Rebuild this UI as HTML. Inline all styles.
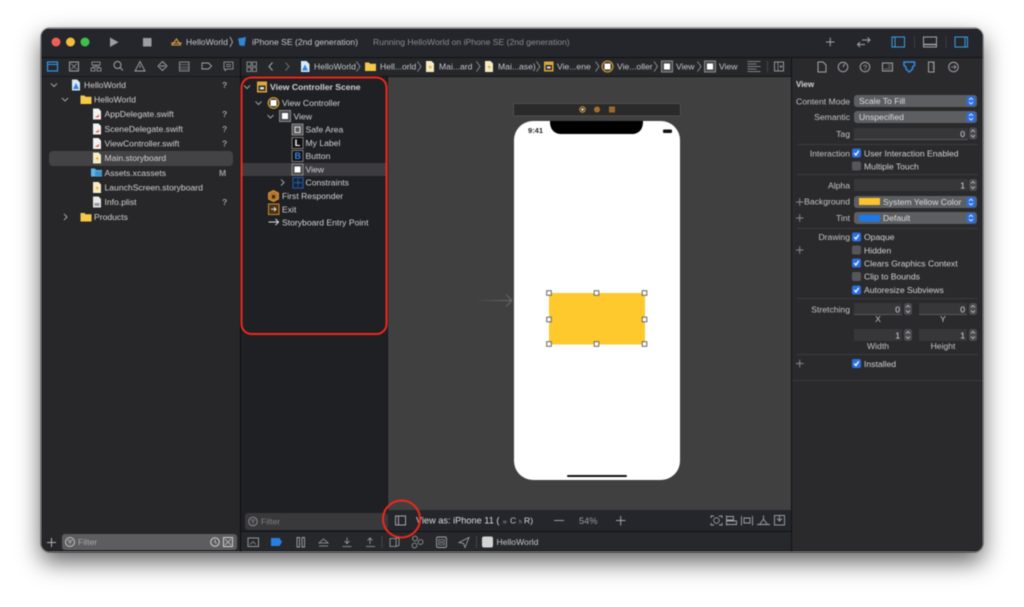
<!DOCTYPE html>
<html><head><meta charset="utf-8"><title>Xcode</title>
<style>
html,body{margin:0;padding:0;background:#fff;width:1024px;height:607px;overflow:hidden}
svg{display:block;position:absolute;left:0;top:0;filter:blur(.4px)}
text{font-family:"Liberation Sans",sans-serif;font-size:8.6px;fill:#d2d2d3}
.w{position:absolute;left:41px;top:28px;width:942px;height:524px;border-radius:9px;box-shadow:0 0 2px rgba(0,0,0,.5),0 10px 24px rgba(0,0,0,.62)}
.r{text-anchor:end;fill:#c4c4c5}
.m{text-anchor:middle;fill:#c4c4c5}
.g{fill:#9a9a9d}
.ic{fill:none;stroke:#a2a4a8}
</style></head><body>
<div class="w"></div>
<svg width="1024" height="607" viewBox="0 0 1024 607">
<defs>
<clipPath id="win"><rect x="41" y="28" width="942" height="524" rx="9"/></clipPath>
<g id="doc"><path d="M-4-5.500h5.500l2.500 2.500v8.500h-8z" fill="#f2f2f2"/></g>
<g id="swift"><use href="#doc"/><path d="M-2 3.500l3.500-.3 1-2.700-2.500 1.500z" fill="#e8502f"/></g>
<g id="sb"><path d="M-4-5.500h5.500l2.500 2.500v8.500h-8z" fill="#f6edc6"/><path d="M.5-2l-2 3h2l-1 2.500 2.500-3.500h-2z" fill="#e0a020"/></g>
<g id="folder"><path d="M-5.500-4h4l1 1.300h6v7.200h-11z" fill="#f5c94a"/></g>
<g id="sq"><rect x="-5.500" y="-5.500" width="11" height="11" fill="#4a4a4d" stroke="#8a8a8d"/><rect x="-3" y="-3" width="6" height="6" fill="#fff"/></g>
<g id="chk"><rect x="-4.500" y="-4.500" width="9" height="9" rx="2" fill="#2a6fdc"/><path d="M-2.200 0l1.600 2 2.800-4.200" fill="none" stroke="#fff" stroke-width="1.300"/></g>
<g id="unchk"><rect x="-4.500" y="-4.500" width="9" height="9" rx="2" fill="#56575a"/></g>
<g id="pop"><rect x="-4.500" y="-5" width="9" height="10" rx="2.500" fill="#2a6fdc"/><path d="M-2-1l2-2 2 2M-2 1l2 2 2-2" fill="none" stroke="#fff" stroke-width=".8"/></g>
<g id="step"><rect x="-4" y="-6" width="8" height="12" rx="2.500" fill="#4b4c4f"/><path d="M-2-1.500l2-2 2 2M-2 1.500l2 2 2-2" fill="none" stroke="#c8c8c8" stroke-width=".8"/></g>
<path id="dn" d="M-3-1.500l3 3 3-3" fill="none" stroke="#9c9c9f" stroke-width="1.100"/>
<path id="rt" d="M-1.500-3l3 3-3 3" fill="none" stroke="#9c9c9f" stroke-width="1.100"/>
<path id="crumb" d="M-1.500-5l3.500 5-3.500 5" fill="none" stroke="#8f9094" stroke-width=".9"/>
<g id="hd"><rect x="-2.300" y="-2.300" width="4.600" height="4.600" fill="#fff" stroke="#666" stroke-width="1"/></g>
<linearGradient id="ar"><stop offset="0" stop-color="#404040"/><stop offset="1" stop-color="#6e6e6e"/></linearGradient>
</defs>
<g clip-path="url(#win)">
<rect x="41" y="28" width="942" height="524" fill="#252628"/>
<!-- toolbar -->
<rect x="41" y="28" width="942" height="29" fill="#24262b"/>
<rect x="41" y="28" width="942" height="1" fill="#5a5a5d"/>
<rect x="41" y="57" width="942" height="1" fill="#111214"/>
<!-- second row -->
<rect x="41" y="58" width="942" height="18" fill="#25272b"/>
<rect x="241" y="76" width="551" height="1" fill="#131416"/>
<rect x="41" y="76" width="200" height="1" fill="#17181a"/>
<rect x="792" y="76" width="191" height="1" fill="#17181a"/>
<!-- navigator -->
<rect x="41" y="77" width="199" height="475" fill="#272729"/>
<rect x="240" y="58" width="1" height="494" fill="#0e0e10"/>
<rect x="49" y="151" width="184" height="15" rx="4" fill="#434346"/>
<!-- outline -->
<rect x="241" y="77" width="146" height="433" fill="#1f2023"/>
<rect x="241" y="163" width="146" height="13" fill="#3c3c3f"/>
<rect x="241" y="510" width="147" height="21" fill="#1f2023"/>
<!-- canvas -->
<rect x="388" y="77" width="404" height="433" fill="#404040"/>
<rect x="387" y="77" width="1" height="433" fill="#161618"/>
<rect x="388" y="510" width="404" height="21" fill="#24262b"/>
<rect x="241" y="531" width="551" height="1" fill="#111214"/>
<rect x="241" y="532" width="551" height="20" fill="#26282c"/>
<!-- inspector -->
<rect x="792" y="58" width="191" height="494" fill="#2a2a2c"/>
<rect x="791" y="58" width="1" height="494" fill="#111214"/>
<rect x="792" y="380" width="191" height="1" fill="#3a3a3c"/>

<!-- traffic lights -->
<circle cx="56" cy="42" r="4.500" fill="#ee5f58"/>
<circle cx="70.500" cy="42" r="4.500" fill="#f6bd3c"/>
<circle cx="85" cy="42" r="4.500" fill="#3fc14a"/>
<path d="M110 37.500v9.500l8.500-4.750z" fill="#9c9ea2"/>
<rect x="143" y="38" width="8.500" height="8.500" fill="#9c9ea2"/>
<path d="M172 45l4.500-6 4 6zM171 43h11" fill="none" stroke="#d8a040" stroke-width="1.100"/>
<text x="186" y="45.200" style="fill:#c6c7ca">HelloWorld</text>
<path d="M230 37l2.500 5-2.500 5" fill="none" stroke="#a0a0a4"/>
<path d="M238 38.500l8-1.500-1.500 9-5-.5z" fill="#2f86d8"/>
<text x="252" y="45.200" style="fill:#c6c7ca">iPhone SE (2nd generation)</text>
<text x="373" y="45.200" style="fill:#8b8c90">Running HelloWorld on iPhone SE (2nd generation)</text>
<path d="M826 42h8.500M830.200 37.800v8.500" class="ic"/>
<path d="M858 44.500h7m-5-2.500l-2.500 2.500 2.500 2.500M862 40h8m-2.500-2.500l2.500 2.500-2.500 2.500" class="ic"/>
<rect x="892" y="37" width="12.500" height="10" fill="none" stroke="#3b9fe0"/><path d="M895 37v10" stroke="#3b9fe0"/>
<path d="M914.500 36v12" stroke="#3a3c40"/>
<rect x="923.500" y="37" width="13" height="10" class="ic"/><path d="M923.500 44.500h13" stroke="#a2a4a8" stroke-width="1.500"/>
<path d="M946 36v12" stroke="#3a3c40"/>
<rect x="955" y="37" width="12.500" height="10" fill="none" stroke="#3b9fe0"/><path d="M965 37v10" stroke="#3b9fe0"/>

<!-- navigator tabs -->
<rect x="47.500" y="62" width="10" height="9" fill="none" stroke="#3a93e6" stroke-width="1.200"/><path d="M47.500 64.500h10" stroke="#3a93e6"/>
<rect x="69.500" y="62" width="9" height="9" class="ic"/><path d="M71 63.500l6 6m0-6l-6 6" class="ic" stroke-width=".7"/>
<path d="M92 62h8v3h-8zM91 68h4v3h-4zM97 68h4v3h-4zM96 65v1.500h-3v1.500m3-1.500h3v1.500" class="ic" stroke-width=".8"/>
<circle cx="117.500" cy="65" r="3.500" class="ic"/><path d="M120 67.500l3 3" class="ic"/>
<path d="M140 61.500l5 9.500h-10zM140 65v3" class="ic" stroke-width=".9"/>
<path d="M162.500 61.500l4.500 4.500-4.500 4.500-4.500-4.500zM160 66h5" class="ic" stroke-width=".9"/>
<rect x="179.500" y="62" width="9.500" height="9" class="ic" stroke-width=".8"/><path d="M179.500 64.500h9.500M179.500 67h9.500M179.500 69h9.500" class="ic" stroke-width=".6"/>
<path d="M202 63h6.500l3 3-3 3h-6.500z" class="ic" stroke-width=".9"/>
<path d="M224 62h9v7h-6l-2 1.500v-1.500h-1zM226 64.500h5M226 66.500h5" class="ic" stroke-width=".8"/>

<!-- navigator tree -->
<use href="#dn" x="54" y="85"/>
<path d="M72 79.500h5l3 3v8h-8z" fill="#d8e8f8"/><path d="M73 89l3-6 3 6z" fill="#2f86d8"/>
<text x="84" y="88.200">HelloWorld</text><text x="222" y="88.200" class="g" style="font-weight:bold">?</text>
<use href="#dn" x="65" y="99.500"/><use href="#folder" x="86" y="99.500"/><text x="94" y="102.700">HelloWorld</text>
<use href="#swift" x="97" y="114"/><text x="104.500" y="117.200">AppDelegate.swift</text><text x="222" y="117.200" class="g" style="font-weight:bold">?</text>
<use href="#swift" x="97" y="129"/><text x="104.500" y="132.200">SceneDelegate.swift</text><text x="222" y="132.200" class="g" style="font-weight:bold">?</text>
<use href="#swift" x="97" y="143.500"/><text x="104.500" y="146.700">ViewController.swift</text><text x="222" y="146.700" class="g" style="font-weight:bold">?</text>
<use href="#sb" x="97" y="158"/><text x="104.500" y="161.200">Main.storyboard</text>
<path d="M91 168.500h4l1 1.500h6v6.500h-11z" fill="#5cb8ea"/><rect x="95" y="171" width="7" height="5" fill="#3d94cc"/>
<text x="104.500" y="176.200">Assets.xcassets</text><text x="219" y="176.200" class="g" style="font-weight:bold">M</text>
<use href="#sb" x="97" y="187.500"/><text x="104.500" y="190.700">LaunchScreen.storyboard</text>
<path d="M93 196.500h5.500l2.500 2.500v8.500h-8z" fill="#e8e8e8"/><rect x="94.500" y="203" width="5" height="3" fill="#999"/>
<text x="104.500" y="205.200">Info.plist</text><text x="222" y="205.200" class="g" style="font-weight:bold">?</text>
<use href="#rt" x="65.500" y="217"/><use href="#folder" x="86" y="217"/><text x="94" y="220.200">Products</text>

<!-- nav filter -->
<path d="M47 542.500h9M51.500 538v9" stroke="#b0b0b3"/>
<rect x="62" y="534" width="175" height="16" rx="3" fill="#5d5d5f"/>
<circle cx="70" cy="542" r="4.500" fill="none" stroke="#c6c6c6"/><path d="M67.500 540.500h5M68.500 542.300h3M69.500 544h1" stroke="#c6c6c6" stroke-width=".8"/>
<text x="78" y="545.200" style="fill:#a9a9ab">Filter</text>
<circle cx="215" cy="542" r="4.300" fill="none" stroke="#d0d0d0"/><path d="M215 539.500v2.500l1.500 1.500" fill="none" stroke="#d0d0d0" stroke-width=".8"/>
<rect x="223.500" y="537.500" width="9" height="9" fill="none" stroke="#d0d0d0"/><path d="M225 539l6 6m0-6l-6 6" stroke="#d0d0d0" stroke-width=".7"/>

<!-- breadcrumb -->
<path d="M247 62h4v4h-4zM252.500 62h4v4h-4zM247 67.500h4v4h-4zM252.500 67.500h4v4h-4z" class="ic" stroke-width=".8"/>
<path d="M272.500 62.500l-3.500 4 3.500 4" class="ic" stroke-width="1.100"/>
<path d="M285.500 62.500l3.500 4-3.500 4" fill="none" stroke="#66686c" stroke-width="1.100"/>
<path d="M301 61h5.500l3 3v8h-8.500z" fill="#d8e8f8"/><path d="M302 70.500l3-6 3 6z" fill="#2f86d8"/>
<text x="314" y="69.700" style="fill:#c6c7ca">HelloWorld</text>
<use href="#crumb" x="358" y="66.500"/><use href="#folder" x="370.500" y="66.500"/>
<text x="380" y="69.700" style="fill:#c6c7ca">Hell...orld</text>
<use href="#crumb" x="419" y="66.500"/><use href="#sb" x="430" y="66.500"/>
<text x="439" y="69.700" style="fill:#c6c7ca">Mai...ard</text>
<use href="#crumb" x="478" y="66.500"/><use href="#sb" x="489" y="66.500"/>
<text x="498" y="69.700" style="fill:#c6c7ca">Mai...ase)</text>
<use href="#crumb" x="538" y="66.500"/>
<rect x="544" y="61.500" width="9.500" height="10" fill="#e0a838"/><rect x="545.500" y="65" width="6.500" height="5" fill="#2d2d2d"/><rect x="547" y="66.500" width="3.500" height="2" fill="#ddd"/>
<text x="557" y="69.700" style="fill:#c6c7ca">Vie...ene</text>
<use href="#crumb" x="597" y="66.500"/>
<circle cx="607.500" cy="66.500" r="5.500" fill="#3a3a3a" stroke="#dba22e" stroke-width="1.100"/><rect x="604.500" y="63.500" width="6" height="6" fill="#fff"/>
<text x="617" y="69.700" style="fill:#c6c7ca">Vie...oller</text>
<use href="#crumb" x="655.500" y="66.500"/><use href="#sq" x="667" y="66.500"/>
<text x="676" y="69.700" style="fill:#c6c7ca">View</text>
<use href="#crumb" x="699" y="66.500"/><use href="#sq" x="710" y="66.500"/>
<text x="719" y="69.700" style="fill:#c6c7ca">View</text>
<path d="M747.500 61.500h13M747.500 64h9M747.500 66.500h13M747.500 69h9M747.500 71.500h13" class="ic" stroke-width=".7"/>
<path d="M767.500 61v11" stroke="#44464a"/>
<rect x="774.500" y="62" width="9" height="9" class="ic" stroke-width=".9"/><path d="M778 62v9M779.500 66.500h3M781 65v3" class="ic" stroke-width=".7"/>

<!-- outline tree -->
<use href="#dn" x="247" y="87"/>
<rect x="257" y="81.500" width="10" height="11" fill="#e0a838"/><rect x="258.500" y="85.500" width="7" height="5.500" fill="#2d2d2d"/><rect x="260" y="87" width="4" height="2.500" fill="#ddd"/>
<text x="270" y="90" style="font-weight:bold">View Controller Scene</text>
<use href="#dn" x="258.500" y="103"/>
<circle cx="273.500" cy="103" r="5.300" fill="#3a3a3a" stroke="#dba22e" stroke-width="1.200"/><rect x="270.500" y="100" width="6" height="6" fill="#fff"/>
<text x="282" y="106.200">View Controller</text>
<use href="#dn" x="270.500" y="116.500"/><use href="#sq" x="285" y="116"/>
<text x="293.500" y="119.500">View</text>
<rect x="292" y="124" width="11" height="11" fill="#5a5a5d" stroke="#888"/><rect x="295" y="127" width="5" height="5.500" fill="none" stroke="#ddd"/>
<text x="305.500" y="132.700">Safe Area</text>
<rect x="292" y="137.500" width="11" height="11" fill="#111" stroke="#777"/><text x="294.800" y="146.200" style="fill:#fff;font-weight:bold;font-size:9px">L</text>
<text x="305.500" y="146">My Label</text>
<rect x="292" y="150.500" width="11" height="11" fill="#111" stroke="#777"/><text x="294.500" y="159.200" style="fill:#3b82e8;font-weight:bold;font-size:9px">B</text>
<text x="305.500" y="159.200">Button</text>
<use href="#sq" x="297.500" y="169.500"/>
<text x="305.500" y="172.500">View</text>
<use href="#rt" x="282.500" y="182.500"/>
<rect x="293" y="177.500" width="10" height="10.500" fill="#11243f" stroke="#2a5ca0"/><path d="M298 179v7.500M294.500 182.700h7" stroke="#4a9be8" stroke-width=".8" stroke-dasharray="1 1"/>
<text x="305.500" y="185.700">Constraints</text>
<path d="M273.500 190.500l5 2.500v6l-5 2.500-5-2.500v-6z" fill="#b8742a" stroke="#e0a040" stroke-width=".8"/><rect x="272" y="195" width="3" height="3.500" fill="#3a2a12"/>
<text x="282" y="199.200">First Responder</text>
<rect x="268.500" y="204" width="10.500" height="10.500" fill="#4a3214" stroke="#c98a30"/><path d="M271 209.200h5m-2-2l2 2-2 2" fill="none" stroke="#f0f0f0" stroke-width=".9"/>
<text x="282" y="212.500">Exit</text>
<path d="M268.500 222h10m-3-3l3 3-3 3" fill="none" stroke="#dcdcdc"/>
<text x="282" y="225.500">Storyboard Entry Point</text>
<rect x="241.500" y="77.500" width="145" height="256.500" rx="10" fill="none" stroke="#f0271d" stroke-width="2"/>

<!-- outline filter -->
<rect x="245" y="513" width="143" height="17" rx="3" fill="#39393b"/>
<circle cx="253" cy="521.500" r="4.300" fill="none" stroke="#8c8c8e"/><path d="M250.800 520h4.400M251.800 521.700h2.400M252.500 523.300h1" stroke="#8c8c8e" stroke-width=".8"/>
<text x="261" y="524.700" style="fill:#7f7f81">Filter</text>

<!-- canvas -->
<rect x="513.500" y="103.500" width="167" height="12.500" rx="1" fill="#2a2a2a" stroke="#4e4e4e"/>
<circle cx="582.500" cy="109.500" r="2.700" fill="#333" stroke="#d09a2c"/><rect x="581.500" y="108.500" width="2" height="2" fill="#fff"/>
<circle cx="597" cy="109.500" r="3" fill="#a86e28"/>
<rect x="609" y="106.500" width="6" height="6" fill="#9a6a2a"/>
<rect x="514" y="121" width="166" height="359" rx="19" fill="#fff"/>
<path d="M550 121h93v1c0 7-4 12-11 12h-71c-7 0-11-5-11-12z" fill="#000"/>
<text x="528" y="133" style="fill:#222;font-size:7.500px;font-weight:bold">9:41</text>
<rect x="663" y="129.500" width="9" height="3.500" rx="1" fill="#111"/>
<rect x="567" y="475" width="60" height="2" rx="1" fill="#111"/>
<rect x="549" y="293" width="96" height="51.500" fill="#fdc92c"/>
<use href="#hd" x="549" y="293"/><use href="#hd" x="596.500" y="293"/><use href="#hd" x="644.500" y="293"/>
<use href="#hd" x="549" y="319.500"/><use href="#hd" x="644.500" y="319.500"/>
<use href="#hd" x="549" y="344"/><use href="#hd" x="596.500" y="344"/><use href="#hd" x="644.500" y="344"/>
<rect x="474" y="300" width="38" height="1" fill="url(#ar)"/>
<path d="M506 294.500l6 6-6 6" fill="none" stroke="#666"/>

<!-- canvas bar -->
<rect x="395.500" y="516" width="10" height="9" fill="none" stroke="#a2a4a8"/><path d="M398.500 516v9" stroke="#a2a4a8"/>
<text x="416" y="523.500" style="font-size:9.200px;fill:#dcdcdd">View as: iPhone 11 (</text>
<text x="503" y="523.500" style="font-size:5px;fill:#9a9a9d">w</text><text x="510" y="523.500" style="font-size:8.600px;fill:#c6c7ca">C</text>
<text x="519" y="523.500" style="font-size:5px;fill:#9a9a9d">h</text><text x="524" y="523.500" style="font-size:8.600px;fill:#dcdcdd">R)</text>
<path d="M554 520.500h10" stroke="#9a9ca0"/>
<text x="579" y="524" style="font-size:9.200px;fill:#9a9ca0">54%</text>
<path d="M616 520.500h9.500M620.700 516v9.500" stroke="#a2a4a8"/>
<path d="M711 518v-2h3M719 516h3v2M722 523v2h-3M714 525h-3v-2" class="ic" stroke-width=".9"/><circle cx="716.500" cy="520.500" r="2.800" class="ic" stroke-width=".8"/>
<path d="M726.500 515.500v10M726.500 516.500h7v3.500h-7M726.500 521h10v3.500h-10" class="ic" stroke-width=".9"/>
<path d="M741.500 516v9.500M752.500 516v9.500M744 518h6v5h-6z" class="ic" stroke-width=".9"/>
<path d="M757 524.500h13M763.500 515.500v3M760 524l3.500-5 3.500 5" class="ic" stroke-width=".9"/>
<rect x="774.500" y="515.500" width="10" height="9.500" class="ic" stroke-width=".9"/><path d="M779.500 515v6m-2.500-2.500l2.500 2.500 2.500-2.500" class="ic" stroke-width=".9"/>

<!-- red circle -->
<circle cx="401.500" cy="519" r="18.500" fill="none" stroke="#f0271d" stroke-width="2"/>

<!-- bottom bar -->
<rect x="248" y="538" width="10.500" height="8.500" class="ic" stroke-width=".9"/><path d="M250 544.500l3-3 3 3" class="ic" stroke-width=".7"/>
<path d="M271 538h8.500l2.500 4-2.500 4h-8.500z" fill="#2a7de1"/>
<path d="M297 537.500h2.500v9.500h-2.500zM302 537.500h2.500v9.500H302z" class="ic" stroke-width=".9"/>
<path d="M319 543l4.500-4 4.500 4zM319 546h9" class="ic" stroke-width=".8"/>
<path d="M347 537.500v6m-2.500-2.500l2.500 2.500 2.500-2.500M342.500 546.500h9" class="ic" stroke-width=".8"/>
<path d="M370 544v-6m-2.500 2.500l2.500-2.500 2.500 2.500M366 546.500h9" class="ic" stroke-width=".8"/>
<path d="M382 536v12" stroke="#44464a"/>
<path d="M390 538.500h6v8h-6zM396 537.500l3 1v7l-3 1" class="ic" stroke-width=".8"/>
<circle cx="415" cy="538.500" r="2.400" class="ic" stroke-width=".8"/><circle cx="420.500" cy="542" r="2.400" class="ic" stroke-width=".8"/><circle cx="414.500" cy="545.500" r="2.400" class="ic" stroke-width=".8"/>
<rect x="436.500" y="537" width="10" height="10.500" rx="1.500" class="ic" stroke-width=".9"/><rect x="438.500" y="539.500" width="6" height="2" class="ic" stroke-width=".6"/><rect x="438.500" y="543" width="6" height="2" class="ic" stroke-width=".6"/>
<path d="M459 542.500l10-5-4 10-1.500-4z" class="ic" stroke-width=".8"/>
<path d="M476.500 536v12" stroke="#44464a"/>
<rect x="482" y="536.500" width="11" height="11" rx="2" fill="#d4d4d4"/>
<text x="496.500" y="545.200" style="fill:#c6c7ca">HelloWorld</text>

<!-- inspector tabs -->
<path d="M818 62h5l3 3v7h-8z" class="ic"/>
<circle cx="843" cy="67" r="4.800" class="ic"/><path d="M843 67l1.500-3" class="ic"/>
<circle cx="865" cy="67" r="4.800" class="ic"/><text x="863" y="70" style="font-size:7.500px;fill:#a2a4a8">?</text>
<rect x="882.500" y="63" width="10" height="8" class="ic"/><path d="M888 65h3M888 67h3M884 69h7" class="ic" stroke-width=".6"/>
<path d="M904 62h10.500v3.500l-2 1.500v2l-3.200 3-3.300-3v-2l-2-1.500z" fill="none" stroke="#2f8ce6" stroke-width="1.500"/>
<rect x="928.500" y="62" width="5.500" height="10" class="ic"/><path d="M932 63.500h2M932 66h2M932 68.500h2" class="ic" stroke-width=".6"/>
<circle cx="953.500" cy="67" r="4.800" class="ic"/><path d="M951 67h5m-2-2l2 2-2 2" class="ic" stroke-width=".8"/>

<!-- inspector -->
<text x="796" y="87" style="font-weight:bold;fill:#d6d6d7;font-size:8px">View</text>
<text x="850" y="104.300" class="r">Content Mode</text>
<rect x="854" y="95" width="123" height="12" rx="3" fill="#5d5e61"/><text x="859" y="104.200" style="fill:#dcdcdd">Scale To Fill</text><use href="#pop" x="971" y="101"/>
<text x="850" y="120" class="r">Semantic</text>
<rect x="854" y="111" width="123" height="12" rx="3" fill="#5d5e61"/><text x="859" y="120.200" style="fill:#dcdcdd">Unspecified</text><use href="#pop" x="971" y="117"/>
<text x="850" y="137" class="r">Tag</text>
<rect x="854" y="128" width="114" height="11.500" fill="#37373a"/><rect x="854" y="139" width="114" height="1" fill="#57575a"/><text x="965" y="137" class="r" style="fill:#dcdcdd">0</text><use href="#step" x="973" y="133.500"/>
<rect x="797" y="144" width="181" height="1" fill="#3c3c3f"/>
<text x="850" y="156.500" class="r">Interaction</text><use href="#chk" x="856.500" y="153"/><text x="864" y="156.500">User Interaction Enabled</text>
<use href="#unchk" x="856.500" y="166"/><text x="864" y="169.700">Multiple Touch</text>
<rect x="797" y="174" width="181" height="1" fill="#3c3c3f"/>
<text x="850" y="188.500" class="r">Alpha</text>
<rect x="854" y="179" width="114" height="12" fill="#37373a"/><text x="965" y="188.500" class="r" style="fill:#dcdcdd">1</text><use href="#step" x="973" y="185"/>
<path d="M796 202h7.500M799.700 198.200v7.500" stroke="#8a8a8d"/>
<text x="850" y="204.500" class="r">Background</text>
<rect x="854" y="196" width="123" height="12" rx="3" fill="#5d5e61"/><rect x="859" y="198" width="21" height="7" fill="#fdc22c"/><text x="883" y="205" style="fill:#dcdcdd">System Yellow Color</text><use href="#pop" x="971" y="202"/>
<path d="M796 218h7.500M799.700 214.200v7.500" stroke="#8a8a8d"/>
<text x="850" y="221" class="r">Tint</text>
<rect x="854" y="212" width="123" height="12" rx="3" fill="#5d5e61"/><rect x="859" y="215" width="21" height="6.500" fill="#1a78f0"/><text x="883" y="221" style="fill:#dcdcdd">Default</text><use href="#pop" x="971" y="218"/>
<rect x="797" y="228" width="181" height="1" fill="#3c3c3f"/>
<text x="850" y="240.200" class="r">Drawing</text><use href="#chk" x="856.500" y="237"/><text x="864" y="240.200">Opaque</text>
<path d="M796 250h7.500M799.700 246.200v7.500" stroke="#8a8a8d"/>
<use href="#unchk" x="856.500" y="250"/><text x="864" y="253.300">Hidden</text>
<use href="#chk" x="856.500" y="263"/><text x="864" y="266.500">Clears Graphics Context</text>
<use href="#unchk" x="856.500" y="276.500"/><text x="864" y="279.700">Clip to Bounds</text>
<use href="#chk" x="856.500" y="290"/><text x="864" y="293">Autoresize Subviews</text>
<rect x="797" y="298" width="181" height="1" fill="#3c3c3f"/>
<text x="850" y="312.300" class="r">Stretching</text>
<rect x="854" y="303" width="48" height="11.500" fill="#37373a"/><rect x="854" y="314" width="48" height="1" fill="#57575a"/><text x="900" y="312.300" class="r" style="fill:#dcdcdd">0</text><use href="#step" x="908" y="309"/>
<rect x="919" y="303" width="48" height="11.500" fill="#37373a"/><rect x="919" y="314" width="48" height="1" fill="#57575a"/><text x="965" y="312.300" class="r" style="fill:#dcdcdd">0</text><use href="#step" x="973" y="309"/>
<text x="878" y="322" class="m">X</text><text x="943" y="322" class="m">Y</text>
<rect x="854" y="329" width="48" height="12" fill="#37373a"/><text x="900" y="338.500" class="r" style="fill:#dcdcdd">1</text><use href="#step" x="908" y="335"/>
<rect x="919" y="329" width="48" height="12" fill="#37373a"/><text x="965" y="338.500" class="r" style="fill:#dcdcdd">1</text><use href="#step" x="973" y="335"/>
<text x="878" y="349" class="m">Width</text><text x="943" y="349" class="m">Height</text>
<rect x="797" y="354" width="181" height="1" fill="#3c3c3f"/>
<path d="M796 363.500h7.500M799.700 359.700v7.500" stroke="#8a8a8d"/>
<use href="#chk" x="856.500" y="363.500"/><text x="864" y="366.800">Installed</text>
</g>
</svg>
</body></html>
